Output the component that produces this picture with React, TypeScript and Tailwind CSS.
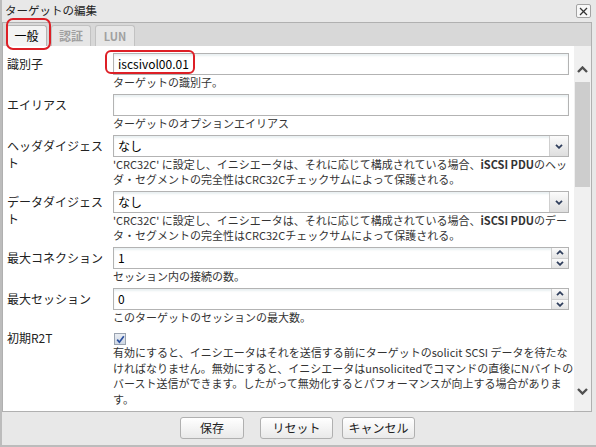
import React from "react";

function Chevron({ dir, className }: { dir: "up" | "down"; className?: string }) {
  return (
    <svg width="8" height="5" viewBox="0 0 8 5" className={className}>
      {dir === "up" ? (
        <polyline points="1,4.2 4,1.2 7,4.2" fill="none" stroke="#2f3e5c" strokeWidth="1.8" />
      ) : (
        <polyline points="1,0.8 4,3.8 7,0.8" fill="none" stroke="#2f3e5c" strokeWidth="1.8" />
      )}
    </svg>
  );
}

function ScrollChevron({ dir }: { dir: "up" | "down" }) {
  return (
    <svg width="11" height="7" viewBox="0 0 11 7" className="block mx-auto">
      {dir === "up" ? (
        <polyline points="1,6 5.5,1.5 10,6" fill="none" stroke="#505050" strokeWidth="2.4" />
      ) : (
        <polyline points="1,1 5.5,5.5 10,1" fill="none" stroke="#505050" strokeWidth="2.4" />
      )}
    </svg>
  );
}

function Row({
  label,
  children,
  desc,
  labelPad = "pt-[2px]",
  descLeading = "leading-[15px]",
}: {
  label: React.ReactNode;
  children: React.ReactNode;
  desc: React.ReactNode;
  labelPad?: string;
  descLeading?: string;
}) {
  return (
    <div className="flex shrink-0">
      <div className={`w-[106px] shrink-0 text-[12px] leading-[17px] text-[#222] ${labelPad}`}>{label}</div>
      <div className="flex-1 min-w-0">
        {children}
        <div className={`text-[11px] ${descLeading} text-[#333] whitespace-nowrap`}>{desc}</div>
      </div>
    </div>
  );
}

const boxCls =
  "h-[22px] border border-[#b3b3b3] bg-white shadow-[inset_0_2px_2px_rgba(170,195,205,0.25)] flex items-center text-[12px] text-black";

function TextBox({ value }: { value: string }) {
  return <div className={`${boxCls} pl-[4px]`}>{value}</div>;
}

function SelectBox({ value }: { value: string }) {
  return (
    <div className={`${boxCls} pl-[4px]`}>
      <span className="flex-1">{value}</span>
      <div className="w-[19px] h-full border-l border-[#cfcfcf] bg-linear-to-b from-[#fbfbfb] to-[#dedede] flex items-center justify-center">
        <Chevron dir="down" />
      </div>
    </div>
  );
}

function NumberBox({ value }: { value: string }) {
  return (
    <div className={`${boxCls} pl-[4px]`}>
      <span className="flex-1">{value}</span>
      <div className="w-[17px] h-full border-l border-[#cfcfcf] flex flex-col">
        <div className="flex-1 bg-linear-to-b from-[#fbfbfb] to-[#e4e4e4] flex items-center justify-center border-b border-[#cfcfcf]">
          <Chevron dir="up" />
        </div>
        <div className="flex-1 bg-linear-to-b from-[#fbfbfb] to-[#e4e4e4] flex items-center justify-center">
          <Chevron dir="down" />
        </div>
      </div>
    </div>
  );
}

function CheckBox({ checked }: { checked: boolean }) {
  return (
    <div className="w-[12px] h-[12px] border border-[#9aa3b0] bg-linear-to-b from-[#e9edf3] to-[#cfd8e4] flex items-center justify-center">
      {checked && (
        <svg width="9" height="9" viewBox="0 0 9 9">
          <polyline points="1.2,4.6 3.4,7.2 7.8,1.2" fill="none" stroke="#2b4f9e" strokeWidth="1.7" />
        </svg>
      )}
    </div>
  );
}

function Button({ children, w }: { children: React.ReactNode; w: string }) {
  return (
    <div
      className={`${w} h-[22px] border border-[#b0b0b0] rounded-[3px] bg-linear-to-b from-[#ffffff] to-[#e9e9e9] flex items-center justify-center text-[12px] text-[#222]`}
    >
      {children}
    </div>
  );
}

export default function App() {
  return (
    <div className="relative w-[596px] h-[447px] bg-[#e8e8e8] font-['Noto_Sans_CJK_JP',sans-serif] text-[#222] flex flex-col border-l-2 border-b-2 border-[#bcbcbc] overflow-hidden">
      {/* title bar */}
      <div className="h-[22px] shrink-0 flex items-center justify-between pl-[3px] pr-[5px]">
        <span className="text-[11.5px] leading-none text-[#222]">ターゲットの編集</span>
        <div className="w-[15px] h-[14px] border border-[#a3a3a3] rounded-[2px] bg-[#f7f7f7] flex items-center justify-center">
          <svg width="9" height="9" viewBox="0 0 9 9">
            <line x1="1" y1="1" x2="8" y2="8" stroke="#333" strokeWidth="1.2" />
            <line x1="8" y1="1" x2="1" y2="8" stroke="#333" strokeWidth="1.2" />
          </svg>
        </div>
      </div>

      {/* main panel */}
      <div className="h-[390px] shrink-0 mr-[4px] border border-[#b0b0b0] flex flex-col">
        {/* tabs */}
        <div className="h-[23px] shrink-0 bg-[#d8d8d8] flex items-end gap-[4px] pl-[3px]">
          <div className="w-[41px] h-[21px] border border-b-0 border-[#b5b5b5] rounded-t-[3px] bg-[#f3f3f3] flex items-center justify-center text-[12px] text-black">
            一般
          </div>
          <div className="w-[40px] h-[21px] border border-b-0 border-[#c2c2c2] rounded-t-[3px] bg-[#e6e6e6] flex items-center justify-center text-[12px] font-bold text-[#a0a0a0]">
            認証
          </div>
          <div className="w-[40px] h-[21px] border border-b-0 border-[#c2c2c2] rounded-t-[3px] bg-[#e6e6e6] flex items-center justify-center text-[11px] font-bold text-[#a0a0a0]">
            LUN
          </div>
        </div>

        <div className="flex flex-1 min-h-0">
          {/* form */}
          <div className="flex-1 min-w-0 bg-white overflow-hidden pt-[7px] pl-[4px] pr-[5px] flex flex-col gap-[4px]">
            <Row label="識別子" desc="ターゲットの識別子。">
              <TextBox value="iscsivol00.01" />
            </Row>
            <Row label="エイリアス" desc="ターゲットのオプションエイリアス">
              <TextBox value="" />
            </Row>
            <Row
              label={
                <>
                  ヘッダダイジェス
                  <br />ト
                </>
              }
              desc={
                <>
                  'CRC32C' に設定し、イニシエータは、それに応じて構成されている場合、
                  <span className="font-semibold">iSCSI PDU</span>のヘッ
                  <br />
                  ダ・セグメントの完全性はCRC32Cチェックサムによって保護される。
                </>
              }
            >
              <SelectBox value="なし" />
            </Row>
            <Row
              label={
                <>
                  データダイジェス
                  <br />ト
                </>
              }
              desc={
                <>
                  'CRC32C' に設定し、イニシエータは、それに応じて構成されている場合、
                  <span className="font-semibold">iSCSI PDU</span>のデー
                  <br />
                  タ・セグメントの完全性はCRC32Cチェックサムによって保護される。
                </>
              }
            >
              <SelectBox value="なし" />
            </Row>
            <Row label="最大コネクション" desc="セッション内の接続の数。">
              <NumberBox value="1" />
            </Row>
            <Row label="最大セッション" desc="このターゲットのセッションの最大数。">
              <NumberBox value="0" />
            </Row>
            <Row
              label="初期R2T"
              labelPad="pt-0"
              descLeading="leading-[15.5px]"
              desc={
                <>
                  有効にすると、イニシエータはそれを送信する前にターゲットのsolicit SCSI データを待たな
                  <br />
                  ければなりません。無効にすると、イニシエータはunsolicitedでコマンドの直後にNバイトの
                  <br />
                  バースト送信ができます。したがって無効化するとパフォーマンスが向上する場合がありま
                  <br />
                  す。
                </>
              }
            >
              <div className="h-[16px] pt-[4px] pl-[1px]">
                <CheckBox checked={true} />
              </div>
            </Row>
            <Row label="即時データ" labelPad="pt-0" desc="">
              <div className="h-[16px] pt-[2px] pl-[1px]">
                <CheckBox checked={false} />
              </div>
            </Row>
          </div>

          {/* scrollbar */}
          <div className="w-[17px] shrink-0 bg-[#f0f0f0] flex flex-col">
            <div className="h-[20px]" />
            <ScrollChevron dir="up" />
            <div className="h-[9px]" />
            <div className="h-[105px] mx-[1px] bg-[#cdcdcd]" />
            <div className="flex-1" />
            <ScrollChevron dir="down" />
            <div className="h-[16px]" />
          </div>
        </div>
      </div>

      {/* bottom buttons */}
      <div className="flex-1 flex items-start pt-[5px] pl-[178px]">
        <Button w="w-[64px]">保存</Button>
        <div className="ml-[16px]">
          <Button w="w-[73px]">リセット</Button>
        </div>
        <div className="ml-[9px]">
          <Button w="w-[73px]">キャンセル</Button>
        </div>
      </div>

      {/* red annotation marks */}
      <div className="absolute left-[4px] top-[18px] w-[45px] h-[32px] border-[2.5px] border-[#dd1f26] rounded-[7px] pointer-events-none" />
      <div className="absolute left-[103px] top-[50px] w-[90px] h-[24px] border-[2.5px] border-[#dd1f26] rounded-[6px] pointer-events-none" />
    </div>
  );
}
